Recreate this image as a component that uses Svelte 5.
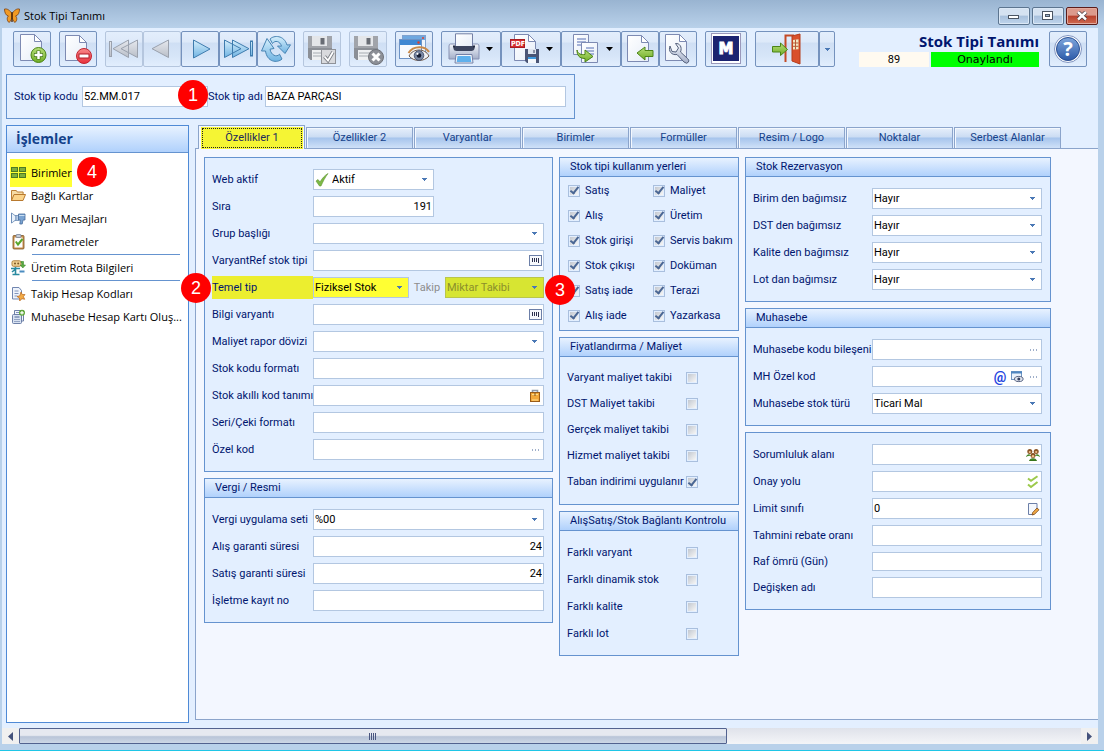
<script>
  const tabs = ['Özellikler 1', 'Özellikler 2', 'Varyantlar', 'Birimler', 'Formüller', 'Resim / Logo', 'Noktalar', 'Serbest Alanlar'];

  const actions = [
    { text: 'Birimler', icon: 'units', marked: true, badge: '4' },
    { text: 'Bağlı Kartlar', icon: 'folder' },
    { text: 'Uyarı Mesajları', icon: 'horn' },
    { text: 'Parametreler', icon: 'clipboard' },
    { text: 'Üretim Rota Bilgileri', icon: 'route', rule: true },
    { text: 'Takip Hesap Kodları', icon: 'account', rule: true },
    { text: 'Muhasebe Hesap Kartı Oluş...', icon: 'ledger' }
  ];

  const general = [
    { label: 'Web aktif', select: 'Aktif', half: true, check: true },
    { label: 'Sıra', value: '191', half: true, right: true },
    { label: 'Grup başlığı', select: '' },
    { label: 'VaryantRef stok tipi', value: '', icons: ['barcode'] },
    { label: 'Temel tip', pair: true },
    { label: 'Bilgi varyantı', value: '', icons: ['barcode'] },
    { label: 'Maliyet rapor dövizi', select: '' },
    { label: 'Stok kodu formatı', value: '' },
    { label: 'Stok akıllı kod tanımı', value: '', icons: ['lock'] },
    { label: 'Seri/Çeki formatı', value: '' },
    { label: 'Özel kod', value: '', icons: ['dots'] }
  ];
  const tax = [
    { label: 'Vergi uygulama seti', select: '%00' },
    { label: 'Alış garanti süresi', value: '24', right: true },
    { label: 'Satış garanti süresi', value: '24', right: true },
    { label: 'İşletme kayıt no', value: '' }
  ];
  const reservation = [
    { label: 'Birim den bağımsız', select: 'Hayır' },
    { label: 'DST den bağımsız', select: 'Hayır' },
    { label: 'Kalite den bağımsız', select: 'Hayır' },
    { label: 'Lot dan bağımsız', select: 'Hayır' }
  ];
  const accounting = [
    { label: 'Muhasebe kodu bileşeni', value: '', icons: ['dots'] },
    { label: 'MH Özel kod', value: '', icons: ['at', 'preview', 'dots'] },
    { label: 'Muhasebe stok türü', select: 'Ticari Mal' }
  ];
  const extra = [
    { label: 'Sorumluluk alanı', value: '', icons: ['people'] },
    { label: 'Onay yolu', value: '', icons: ['checks'] },
    { label: 'Limit sınıfı', value: '0', icons: ['edit'] },
    { label: 'Tahmini rebate oranı', value: '' },
    { label: 'Raf ömrü (Gün)', value: '', short: true },
    { label: 'Değişken adı', value: '' }
  ];
  const places = ['Satış', 'Maliyet', 'Alış', 'Üretim', 'Stok girişi', 'Servis bakım', 'Stok çıkışı', 'Doküman', 'Satış iade', 'Terazi', 'Alış iade', 'Yazarkasa'];
  const pricing = [
    ['Varyant maliyet takibi', false],
    ['DST Maliyet takibi', false],
    ['Gerçek maliyet takibi', false],
    ['Hizmet maliyet takibi', false],
    ['Taban indirimi uygulanır', true]
  ];
  const control = [
    ['Farklı varyant', false],
    ['Farklı dinamik stok', false],
    ['Farklı kalite', false],
    ['Farklı lot', false]
  ];

  const slug = (s) => s.toLowerCase().replace(/[^a-zçğıöşü0-9]+/g, '-');
</script>

{#snippet arrow()}
  <svg class="arrow" width="5" height="3" viewBox="0 0 5 3" aria-hidden="true"><path d="M0 0h5v1H4v1H3v1H2V2H1V1H0z" fill="currentColor" /></svg>
{/snippet}

{#snippet caret()}
  <svg width="8" height="5" viewBox="0 0 8 5" aria-hidden="true"><path d="M0 0h7L3.500 4z" fill="#000" /></svg>
{/snippet}

{#snippet smallIcon(name)}
  <svg width="16" height="16" viewBox="0 0 16 16" aria-hidden="true">
    {#if name === 'units'}
      <g fill="#7fae3a" stroke="#4e7a24"><rect x="1.500" y="2.500" width="6" height="4" /><rect x="9.500" y="2.500" width="6" height="4" /><rect x="1.500" y="8.500" width="6" height="4" /><rect x="9.500" y="8.500" width="6" height="4" /></g>
    {:else if name === 'folder'}
      <path d="M1.500 13V2.500h4.800l1 1.500h5.800v2.500" fill="#f6dca6" stroke="#bb7f35" />
      <path d="M1.500 12.500L4 6.500h11.500l-2.500 6z" fill="#fbd48b" stroke="#b8792e" />
    {:else if name === 'horn'}
      <path d="M1.500 2v10c1.500-.5 2.500-2.500 4.500-2.800V4.800C4 4.500 3 2.500 1.500 2z" fill="#e9f1fa" stroke="#6f8fb8" />
      <rect x="6" y="4.500" width="3" height="5" fill="#b9cee6" stroke="#6f8fb8" stroke-width=".8" />
      <path d="M8.500 3h6.500v6h-2l-.8 4h-2.400l.6-4H8.500z" fill="#79a3d2" stroke="#4a6d9c" stroke-width=".8" /><path d="M9 4.500h5.500" stroke="#c9def2" />
    {:else if name === 'clipboard'}
      <rect x="3" y="1.500" width="11" height="13.500" rx="1" fill="#c98f4e" stroke="#7d5522" stroke-width=".8" />
      <rect x="4.500" y="3.500" width="8" height="10" fill="#fdfdfd" /><rect x="6" y=".5" width="5" height="3" rx="1" fill="#c6ccd6" stroke="#697890" stroke-width=".7" />
      <path d="M5.800 7.500l2.200 3L12.500 5" fill="none" stroke="#57a62c" stroke-width="2" />
    {:else if name === 'route'}
      <rect x="2" y=".8" width="9" height="5.500" rx="1.500" fill="#f2d394" stroke="#b0813c" /><circle cx="5" cy="3.500" r="1" fill="#7a5522" /><circle cx="8.200" cy="3.500" r="1" fill="#7a5522" />
      <path d="M11 1.500h2.500V5H15.500L12.800 8 10.300 5H12V3h-1z" fill="#5fae45" stroke="#3d8a2c" stroke-width=".6" />
      <path d="M1 8.500h9M5.500 7v7M2.500 14.500h7M2 12l3-2.500" stroke="#2a8aa0" stroke-width="1.600" fill="none" /><path d="M9.500 11.500h5" stroke="#4b8cc0" stroke-width="2" />
    {:else if name === 'account'}
      <path d="M2.500 1.500h6.500l2.500 3v8.500h-9z" fill="#eef3fb" stroke="#7186b0" /><path d="M4.500 5h4M4.500 7.500h4M4.500 10h3" stroke="#8295bd" />
      <path d="M11 6l1.200 2.500H15l-1.600 2.200 1.300 2.600-2.900-.6L9.700 15l-.2-3L7 10.600l2.800-.8z" fill="#f4ab45" stroke="#b9691e" stroke-width=".7" />
    {:else if name === 'ledger'}
      <path d="M4.500 5V1.500h9V12H11" fill="#f3f6fb" stroke="#6d80a8" /><path d="M6 3.500h3" stroke="#8295bd" />
      <rect x="2.500" y="5.500" width="9" height="9" rx="1" fill="#d8e2f1" stroke="#6d80a8" /><path d="M4.500 8h5M4.500 10.500h1M6.500 10.500h1M8.500 10.500h1M4.500 12.500h1M6.500 12.500h1M8.500 12.500h1" stroke="#4e6797" />
      <circle cx="12" cy="3.800" r="3" fill="#5da537" /><path d="M12 2v3.600M10.200 3.800h3.600" stroke="#fff" stroke-width="1.200" />
    {:else if name === 'check'}
      <path d="M2 9l2-1.500 2 2.500C8 6.500 10.500 3.500 14 1.500 11 5.500 9 9.500 7 14H5.500z" fill="#7db945" stroke="#5c9430" stroke-width=".6" />
    {:else if name === 'barcode'}
      <rect x="2.500" y="2.500" width="12" height="10" fill="#f7f9fd" stroke="#6c7fa8" /><path d="M5.500 5v4M7.500 5v4M9.500 5v4M11.500 5v5" stroke="#2b2f4d" />
    {:else if name === 'lock'}
      <path d="M5.500 6V2.500h5V6" fill="none" stroke="#8d96a5" stroke-width="1.600" /><rect x="3.500" y="4.500" width="9" height="9" fill="#f2a83a" stroke="#9a5c18" /><path d="M5 6.500h6M5 12h6" stroke="#ffdc8c" /><path d="M8 5v3" stroke="#7a5522" />
    {:else if name === 'dots'}
      <path d="M5 8h1M8 8h1M11 8h1" stroke="#3f5f94" />
    {:else if name === 'preview'}
      <rect x="2.500" y="2.500" width="10" height="8" fill="#eaf2fb" stroke="#6f95c2" /><path d="M2 3.500h11" stroke="#4f86c0" stroke-width="2" /><ellipse cx="9.800" cy="10" rx="4.300" ry="2.600" fill="#dfe4ee" stroke="#5a6684" /><circle cx="9.800" cy="10" r="1.500" fill="#34405f" />
    {:else if name === 'people'}
      <g fill="#8a5526"><circle cx="4.800" cy="4.500" r="2.500" /><circle cx="11.200" cy="4.500" r="2.500" /><circle cx="8" cy="8.500" r="2.500" /></g>
      <g fill="#f1c48e"><circle cx="4.800" cy="5" r="1.100" /><circle cx="11.200" cy="5" r="1.100" /><circle cx="8" cy="9.200" r="1.200" /></g>
      <path d="M1.500 9.500c.5-1.800 3-2.200 4-1M10.500 8.500c1-1.200 3.500-.8 4 1M4.500 13.500c.5-2.200 6.500-2.200 7 0z" fill="#4c9a2c" stroke="#37751d" />
    {:else if name === 'checks'}
      <path d="M3 4.500l3 2.300 6.500-4.500M3 10.500l3 2.500 6.500-5" fill="none" stroke="#9cc94b" stroke-width="2" />
    {:else if name === 'edit'}
      <path d="M3.500 2.500h8.500v6L9 13.500H3.500z" fill="#f5f8fd" stroke="#6c7fa8" /><path d="M12 7l2 1.800-4.500 4.500-2.500.7.700-2.500z" fill="#f0a742" stroke="#7c4a1c" stroke-width=".8" />
    {/if}
  </svg>
{/snippet}

{#snippet floppy(x, y, s)}
  <g transform="translate({x} {y}) scale({s})">
    <path d="M0 0h24v24H2.500L0 21.500z" fill="#8b8f96" /><path d="M0 0h24v12H0z" fill="#a1a4aa" />
    <rect x="4" y="0" width="15" height="10" fill="#e4e6e9" /><rect x="12.500" y="2" width="4" height="6.500" fill="#686c74" />
    <rect x="4" y="14" width="16" height="10" fill="#eef0f2" /><path d="M5 17h14M5 20h14" stroke="#bfc2c7" stroke-width="1.500" />
  </g>
{/snippet}

{#snippet pageShape(x, y, w, h)}
  <path d="M{x} {y}h{w - 7}l7 7v{h - 7}h-{w}z" fill="url(#paper)" stroke="#7d8ab2" />
  <path d="M{x + w - 7} {y}v7h7z" fill="#fff" stroke="#7d8ab2" />
{/snippet}

{#snippet toolIcon(name)}
  <svg width="32" height="32" viewBox="0 0 32 32" aria-hidden="true">
    {#if name === 'new'}
      {@render pageShape(4.5, 1.5, 21, 26)}
      <circle cx="22.500" cy="22" r="7.500" fill="url(#green)" stroke="#4b8416" /><path d="M22.500 17.500v9M18 22h9" stroke="#3d6f12" stroke-width="4" /><path d="M22.500 18v8M18.500 22h8" stroke="#fff" stroke-width="2.500" />
    {:else if name === 'delete'}
      {@render pageShape(3.5, 2.5, 21, 25)}
      <circle cx="22" cy="23" r="7.500" fill="url(#red)" stroke="#c22430" /><rect x="17" y="21" width="10" height="4" fill="#fff" stroke="#b01c28" />
    {:else if name === 'first'}
      <g fill="url(#gray)" stroke="#9aa1ad"><rect x="1.500" y="8.500" width="2" height="15" /><path d="M20.500 7v17.500L5 15.700zM29.500 7v17.500L13 15.700z" /></g>
    {:else if name === 'prev'}
      <path d="M22.500 7v17.500L6 15.700z" fill="url(#gray)" stroke="#9aa1ad" />
    {:else if name === 'next'}
      <path d="M9.500 7v18L26 16z" fill="url(#blue)" stroke="#3f7cae" />
    {:else if name === 'last'}
      <g fill="url(#blue)" stroke="#3f7cae"><path d="M2.500 7v17.500L19 15.700zM10.500 7v17.500L27 15.700z" /><rect x="28.500" y="8" width="2" height="15" /></g>
    {:else if name === 'refresh'}
      <g fill="url(#blue)" stroke="#4683b3"><path d="M10 6C14 2 24 2 27 12l3.500-.2L25 20.500 17.500 13l4 .2C20 8 15 7 12.500 10.500z" /><path d="M22 26C17 30.500 7 29 5.500 18L1.500 18 7 5.500 14 15.500l-4 .7c1 6 6.500 8.500 9.500 5z" /></g>
    {:else if name === 'saveok'}
      {@render floppy(2, 3, 1)}
      <rect x="15.500" y="16.500" width="14" height="14" fill="#d9dadd" stroke="#8f9298" /><path d="M18.500 23.500l3.500 4 5-8.500" fill="none" stroke="#7d8087" stroke-width="3.500" /><path d="M18.500 23.500l3.500 4 5-8.500" fill="none" stroke="#fff" stroke-width="1.800" />
    {:else if name === 'savex'}
      {@render floppy(2, 3, 1)}
      <circle cx="24" cy="24" r="7.500" fill="#8d9097" stroke="#6f7279" /><path d="M20.500 20.500l7 7M27.500 20.500l-7 7" stroke="#fff" stroke-width="3" />
    {:else if name === 'preview'}
      <rect x="4.500" y="2.500" width="23" height="18" fill="#eef5fc" stroke="#7fa2cf" /><path d="M5 3h22v4H5z" fill="#6fa8e0" /><circle cx="25" cy="5" r="1" fill="#e0402c" />
      <rect x="1.500" y="6.500" width="22" height="19" fill="#f6fafe" stroke="#6d93c6" /><path d="M2 7h21v5H2z" fill="#3f88d2" /><circle cx="20.500" cy="9.500" r="1.200" fill="#e0402c" />
      <path d="M11 23c4-8 16-8 20 0-5 6-15 6-20 0z" fill="#f1f2f5" stroke="#6b5648" /><path d="M10.500 20c5-8 17-7 20.500-1" fill="none" stroke="#c98a4a" stroke-width="2" /><circle cx="21" cy="22.500" r="4.800" fill="#7a88a3" stroke="#4b5875" /><circle cx="21" cy="22.500" r="2.300" fill="#151c33" /><circle cx="19.500" cy="20.800" r="1.100" fill="#fff" />
    {:else if name === 'print'}
      <path d="M2.500 11h27q1.500 0 1.500 2v13H1V13q0-2 1.500-2z" fill="url(#metal)" stroke="#8791b3" />
      <path d="M7.500.8h17V14h-17z" fill="url(#paper)" stroke="#7480a6" />
      <path d="M5.500 13h21v3q-1 2-3 2h-15q-2.500 0-3-2z" fill="#3c455f" /><path d="M6 12.500v2M26 12.500v2" stroke="#222a42" stroke-width="2" />
      <path d="M8 21.500h16l1 8.500H7z" fill="#f2f6fc" stroke="#7480a6" /><path d="M9.500 23h13l.8 6H8.700z" fill="#5fb0ec" />
    {:else if name === 'pdf'}
      <path d="M6.500 1.500h14l7 7v19h-21z" fill="url(#paper)" stroke="#7d8ab2" /><path d="M20.500 1.500v7h7z" fill="#fff" stroke="#7d8ab2" />
      <rect x="2.500" y="6.500" width="14" height="8" fill="#d52f30" stroke="#a81c22" /><text x="3" y="13" font-size="7" font-weight="700" fill="#fff" font-family="DejaVu Sans Condensed, sans-serif">PDF</text>
      <path d="M17 16h14v14H19l-2-2z" fill="#4a5575" /><rect x="20" y="16" width="8" height="5" fill="#dfe5ef" /><rect x="20" y="24" width="8" height="6" fill="#f5f8fc" /><path d="M20 25h8" stroke="#3f9ade" stroke-width="2" /><path d="M26 17v3" stroke="#39415e" />
    {:else if name === 'copy'}
      <path d="M5.500 1.500h15v20h-15z" fill="url(#paper)" stroke="#7d8ab2" /><path d="M9 6h9M9 9h9M9 12h5" stroke="#8a9ccb" stroke-width="1.500" />
      <path d="M13.500 9.500h16v20h-16z" fill="url(#paper)" stroke="#7d8ab2" /><path d="M18 15h8M18 18h8M21 21h5" stroke="#8a9ccb" stroke-width="1.500" />
      <path d="M9 17c1 4 4 5 8 4.500V17l8 6.500-8 5.500v-3.500C11 25.500 9 22 9 17z" fill="url(#green)" stroke="#4b8416" />
    {:else if name === 'import'}
      {@render pageShape(3.5, 2.5, 21, 26)}
      <path d="M13 20l8-6v3.500h8v6h-8V27z" fill="url(#green)" stroke="#4b8416" />
    {:else if name === 'wrench'}
      {@render pageShape(3.5, 1.5, 21, 26)}
      <path d="M8 13c-2 5 1.500 9.500 7 8.500l7 7.500q3 2.500 4.500 0 1-2-1-3.500L18.500 19c2-5-1-9-5-8.500l3 4.500-2.500 4-4-.5z" fill="url(#metal)" stroke="#56627d" />
    {:else if name === 'brand'}
      <rect x="1.500" y=".5" width="29" height="30" fill="#fff" stroke="#9a98ba" /><rect x="3" y="3" width="26" height="25" fill="#1b2370" />
      <text x="16" y="21" text-anchor="middle" font-size="15" font-weight="900" fill="#fff" stroke="#fff" font-family="DejaVu Sans, sans-serif">M</text>
    {:else if name === 'exit'}
      <path d="M14.500 29V2.500H23" fill="none" stroke="#c44a26" stroke-width="2" /><path d="M21 3l8-2v30l-8-3z" fill="#d9502b" stroke="#b63c1b" /><path d="M22 7l5.500-.7v10L22 16.500z" fill="#f2e6c2" /><path d="M24.500 6.500v10M22 10h5.500M22 13.300h5.500" stroke="#b65a38" />
      <path d="M1.500 13.500h8V10l7 6.500-7 6V19h-8z" fill="url(#green)" stroke="#4b8416" />
    {:else if name === 'help'}
      <circle cx="16" cy="16" r="13.500" fill="#fff" stroke="#7f93c0" /><circle cx="16" cy="16" r="11.500" fill="url(#help)" stroke="#2a4f92" />
      <text x="16" y="23" text-anchor="middle" font-size="20" font-weight="700" fill="#fff" font-family="Open Sans, sans-serif">?</text>
    {/if}
  </svg>
{/snippet}

{#snippet tool(name, label, kind = '')}
  <button type="button" class="tool {kind}" aria-label={label}>{@render toolIcon(name)}{#if kind === 'split'}{@render caret()}{/if}</button>
{/snippet}

{#snippet choice(id, value, check = false, disabled = false)}
  <span class="choice">
    {#if check}{@render smallIcon('check')}{/if}
    <select {id} {disabled} class:indent={check}><option>{value}</option></select>
    {@render arrow()}
  </span>
{/snippet}

{#snippet row(r, prefix)}
  {@const id = prefix + '-' + slug(r.label)}
  <div class="row">
    {#if r.pair}
      <label for={id} class="marked">{r.label}</label>
      <div class="pair">
        <div class="field yellow">{@render choice(id, 'Fiziksel Stok')}</div>
        <label for="takip" class="muted">Takip</label>
        <div class="field olive">{@render choice('takip', 'Miktar Takibi', false, true)}</div>
      </div>
      <span class="badge two">2</span>
      <span class="badge three">3</span>
    {:else}
      <label for={id}>{r.label}</label>
      <div class="field" class:half={r.half} class:short={r.short}>
        {#if r.select !== undefined}
          {@render choice(id, r.select, r.check)}
        {:else}
          <input {id} type="text" value={r.value} class:right={r.right} />
          {#each r.icons ?? [] as icon}
            {#if icon === 'at'}<span class="at">@</span>{:else}{@render smallIcon(icon)}{/if}
          {/each}
        {/if}
      </div>
    {/if}
  </div>
{/snippet}

{#snippet rows(list, prefix)}
  <div class="rows">{#each list as r}{@render row(r, prefix)}{/each}</div>
{/snippet}

<svg class="defs" width="0" height="0" aria-hidden="true">
  <defs>
    <linearGradient id="paper" x1="0" y1="0" x2="1" y2="1"><stop offset="0" stop-color="#fff" /><stop offset="1" stop-color="#e6edf8" /></linearGradient>
    <linearGradient id="green" x1="0" y1="0" x2="0" y2="1"><stop offset="0" stop-color="#b7e07a" /><stop offset="1" stop-color="#6fac25" /></linearGradient>
    <linearGradient id="red" x1="0" y1="0" x2="0" y2="1"><stop offset="0" stop-color="#f98a8a" /><stop offset="1" stop-color="#e8303c" /></linearGradient>
    <linearGradient id="gray" x1="0" y1="0" x2="0" y2="1"><stop offset="0" stop-color="#e6e9ee" /><stop offset="1" stop-color="#b9bec8" /></linearGradient>
    <linearGradient id="blue" x1="0" y1="0" x2="0" y2="1"><stop offset="0" stop-color="#d6effc" /><stop offset="1" stop-color="#6fb3e2" /></linearGradient>
    <linearGradient id="metal" x1="0" y1="0" x2="0" y2="1"><stop offset="0" stop-color="#f3f6fb" /><stop offset="1" stop-color="#a3aec8" /></linearGradient>
    <linearGradient id="help" x1="0" y1="0" x2="0" y2="1"><stop offset="0" stop-color="#7fa6dc" /><stop offset="1" stop-color="#2c5aa8" /></linearGradient>
  </defs>
</svg>

<div class="window">
  <header class="titlebar">
    <svg width="16" height="16" viewBox="0 0 16 16" aria-hidden="true">
      <path d="M8 6C6 2 3 .5.500 1c0 3 1 6.500 4 7-2 1.500-1.500 5 .5 6.500C7 13.500 8 10 8 7zM8 6c2-4 5-5.500 7.500-5 0 3-1 6.500-4 7 2 1.500 1.500 5-.5 6.500C9 13.500 8 10 8 7z" fill="#f19a24" stroke="#7c3f0c" stroke-width=".8" /><path d="M8 4v10" stroke="#4a2508" stroke-width="1.300" />
    </svg>
    <span class="caption">Stok Tipi Tanımı</span>
    <div class="winbtns">
      <button type="button" aria-label="Simge durumuna küçült"><svg width="12" height="10" viewBox="0 0 12 10"><rect x=".5" y="4.500" width="10" height="3" fill="#fff" stroke="#4b5563" /></svg></button>
      <button type="button" aria-label="Önceki boyut"><svg width="12" height="10" viewBox="0 0 12 10"><rect x=".5" y=".5" width="10" height="8" fill="#fff" stroke="#4b5563" /><rect x="3.500" y="3.500" width="4" height="2" fill="#9fb5cf" stroke="#4b5563" /></svg></button>
      <button type="button" class="close" aria-label="Kapat"><svg width="12" height="10" viewBox="0 0 12 10"><path d="M2 1l8 7.500M10 1L2 8.500" stroke="#4b3a40" stroke-width="4" /><path d="M2 1l8 7.500M10 1L2 8.500" stroke="#fff" stroke-width="2.400" /></svg></button>
    </div>
  </header>

  <div class="client">
    <div class="toolbar">
      <div class="group">{@render tool('new', 'Yeni')}</div>
      <div class="group">{@render tool('delete', 'Sil')}</div>
      <div class="group">
        {@render tool('first', 'İlk', 'off')}{@render tool('prev', 'Önceki', 'off')}{@render tool('next', 'Sonraki')}{@render tool('last', 'Son')}{@render tool('refresh', 'Yenile')}
      </div>
      <div class="group">{@render tool('saveok', 'Kaydet', 'off')}</div>
      <div class="group">{@render tool('savex', 'Vazgeç', 'off')}</div>
      <div class="group">{@render tool('preview', 'Önizle')}</div>
      <div class="group">
        {@render tool('print', 'Yazdır', 'split')}{@render tool('pdf', 'PDF kaydet', 'split')}{@render tool('copy', 'Kopyala', 'split')}{@render tool('import', 'Al')}{@render tool('wrench', 'Ayarlar')}
      </div>
      <div class="group">{@render tool('brand', 'M', 'brand')}</div>
      <div class="group">{@render tool('exit', 'Çıkış', 'exit')}<button type="button" class="tool more" aria-label="Çıkış seçenekleri">{@render arrow()}</button></div>
      <div class="status">
        <h1>Stok Tipi Tanımı</h1>
        <div class="state"><span class="count">89</span><span class="ok">Onaylandı</span></div>
      </div>
      {@render tool('help', 'Yardım')}
    </div>

    <section class="head box">
      <label for="code">Stok tip kodu</label>
      <div class="field"><input id="code" type="text" value="52.MM.017" /></div>
      <label for="name">Stok tip adı</label>
      <div class="field"><input id="name" type="text" value="BAZA PARÇASI" /></div>
      <span class="badge one">1</span>
    </section>

    <div class="main">
      <aside class="side">
        <h2>İşlemler</h2>
        <nav>
          {#each actions as a}
            {#if a.rule}<hr />{/if}
            <div class="action">
              <a href="#{a.icon}" class:marked={a.marked}>{@render smallIcon(a.icon)}<span>{a.text}</span></a>
              {#if a.badge}<span class="badge four">{a.badge}</span>{/if}
            </div>
          {/each}
        </nav>
      </aside>

      <div class="work">
        <div class="tabs" role="tablist">
          {#each tabs as t, i}
            <button type="button" role="tab" aria-selected={i === 0} class:active={i === 0}><span>{t}</span></button>
          {/each}
        </div>
        <div class="page" role="tabpanel">
          <div class="col wide">
            <section class="box">{@render rows(general, 'g')}</section>
            <section class="box"><h3>Vergi / Resmi</h3>{@render rows(tax, 'v')}</section>
          </div>
          <div class="col">
            <section class="box">
              <h3>Stok tipi kullanım yerleri</h3>
              <div class="places">
                {#each places as p}<label><input type="checkbox" checked /><span>{p}</span></label>{/each}
              </div>
            </section>
            <section class="box">
              <h3>Fiyatlandırma / Maliyet</h3>
              <div class="flags">{#each pricing as [p, on]}<label><span>{p}</span><input type="checkbox" checked={on} /></label>{/each}</div>
            </section>
            <section class="box">
              <h3>AlışSatış/Stok Bağlantı Kontrolu</h3>
              <div class="flags loose">{#each control as [p, on]}<label><span>{p}</span><input type="checkbox" checked={on} /></label>{/each}</div>
            </section>
          </div>
          <div class="col far">
            <section class="box"><h3>Stok Rezervasyon</h3>{@render rows(reservation, 'r')}</section>
            <section class="box"><h3>Muhasebe</h3>{@render rows(accounting, 'm')}</section>
            <section class="box">{@render rows(extra, 'e')}</section>
          </div>
        </div>
      </div>
    </div>

    <div class="scroll">
      <button type="button" aria-label="Sola kaydır"><svg width="5" height="9" viewBox="0 0 5 9"><path d="M5 0v9L0 4.500z" fill="#44527c" /></svg></button>
      <div class="track"><div class="thumb"><svg width="8" height="7" viewBox="0 0 8 7"><path d="M.5 0v7M2.500 0v7M4.500 0v7M6.500 0v7" stroke="#4a5680" /></svg></div></div>
      <button type="button" aria-label="Sağa kaydır"><svg width="5" height="9" viewBox="0 0 5 9"><path d="M0 0v9l5-4.500z" fill="#44527c" /></svg></button>
    </div>
  </div>
</div>

<style>
  :global(body) { background: #b9d1ea; }
  * { box-sizing: border-box; }
  .defs { position: absolute; }
  .window {
    --line: #6593cf;
    --soft: #b3c7e1;
    --ink: #00156e;
    display: flex; flex-direction: column; min-height: 100vh;
    padding: 0 6px 6px 2px; background: #b9d1ea; border-bottom: 1px solid #1fc6e6;
    font-family: Roboto, "Noto Sans", sans-serif; font-size: 11px; line-height: 14px; color: var(--ink);
  }
  button, input, select { font: inherit; color: inherit; margin: 0; }
  h1, h2, h3 { margin: 0; }
  svg { display: block; flex: none; }

  .titlebar { display: flex; align-items: center; height: 28px; margin: 0 -6px 0 -2px; padding: 4px 6px 0 4px; gap: 4px; background: linear-gradient(#99b4d1, #b9d1ea); }
  .caption { font-family: "Open Sans", sans-serif; line-height: 16px; color: #000; }
  .winbtns { display: flex; gap: 2px; margin-left: auto; }
  .winbtns button { display: grid; place-items: center; width: 32px; height: 18px; padding: 0; border: 1px solid #5c7590; border-radius: 2px; background: linear-gradient(#d5e2f1 45%, #a8c0dc 50%, #bfd5ec); box-shadow: inset 0 0 0 1px #dbe8f6; }
  .winbtns .close { border-color: #5c1d1a; background: linear-gradient(#dc9a8c 45%, #b8402c 50%, #cf6a50); box-shadow: inset 0 0 0 1px #e3a99c; }

  .client { flex: 1; display: flex; flex-direction: column; background: #e3efff; }
  .toolbar { display: flex; gap: 8px; padding: 3px 11px 0; }
  .group { display: flex; }
  .tool { display: flex; align-items: center; justify-content: center; width: 38px; height: 36px; padding: 0; border: 1px solid #7592bd; border-radius: 2px; background: linear-gradient(#e3eefc 0, #dde9f9 30%, #cfdff4 32%, #d6e5f8 70%, #e2eefd); }
  .tool.off { border-color: #b5c6de; }
  .tool.split { width: 60px; justify-content: space-between; padding: 0 6px 0 6px; }
  .tool.brand { width: 42px; }
  .tool.exit { width: 64px; }
  .tool.more { width: 16px; color: #4a78b5; }
  .status { margin-left: auto; margin-right: 2px; text-align: right; }
  .status h1 { font-family: "Open Sans", sans-serif; font-size: 15px; line-height: 21px; font-weight: 700; color: var(--ink); }
  .state { display: flex; gap: 2px; color: #000; text-align: center; line-height: 15px; }
  .count { width: 70px; background: #fffaf0; }
  .ok { width: 108px; background: #0f0; font-family: "DejaVu Sans", sans-serif; }

  .box { border: 1px solid var(--line); background: #e3efff; }
  .head { position: relative; display: grid; grid-template-columns: 68px 126px 57px 301px; align-items: center; width: 569px; margin: 7px 0 0 4px; padding: 11px 7px; white-space: nowrap; }

  .field { display: flex; align-items: center; height: 21px; border: 1px solid var(--soft); background: #fff; color: #000; min-width: 0; }
  .field.half { width: 121px; }
  .field.short { height: 19px; }
  .field input { flex: 1; width: 100%; min-width: 0; height: 100%; padding: 0 1px; border: 0; background: none; outline: 0; }
  .field .right { text-align: right; }
  .at { width: 18px; text-align: center; font-size: 14px; font-weight: 700; color: #1f45e0; }
  .choice { flex: 1; display: grid; align-items: center; height: 100%; min-width: 0; }
  .choice > :global(*) { grid-area: 1 / 1; }
  .choice > :global(.arrow) { justify-self: end; margin-right: 6px; color: #4a78b5; pointer-events: none; }
  .choice select { width: 100%; height: 100%; padding: 0 1px; border: 0; background: none; appearance: none; outline: 0; opacity: 1; }
  .choice select.indent { padding-left: 18px; }

  .main { flex: 1; display: grid; grid-template-columns: 183px 1fr; gap: 6px; margin: 6px 0 5px 4px; }
  .side { border: 1px solid #4f8ad6; background: #fff; font-family: "Open Sans", sans-serif; color: #000; min-width: 0; }
  .side h2 { height: 27px; padding-left: 9px; border-bottom: 1px solid var(--line); background: linear-gradient(#e8f2ff, #b0d1fc); font-size: 14px; line-height: 26px; color: #15428b; }
  nav { padding: 8px 3px; }
  .action { position: relative; display: flex; height: 23px; align-items: center; }
  .action a { display: flex; align-items: center; gap: 5px; height: 23px; color: #000; text-decoration: none; white-space: nowrap; }
  .action a.marked { height: 28px; background: #ff3; }
  hr { height: 1px; margin: 1px 5px 1px 22px; border: 0; background: var(--line); }

  .work { display: flex; flex-direction: column; min-width: 0; padding-bottom: 3px; }
  .tabs { display: flex; align-items: flex-end; gap: 1px; height: 23px; padding-left: 3px; }
  .tabs button { width: 107px; height: 21px; padding: 0; border: 1px solid #8ba4cb; border-bottom: 0; background: linear-gradient(#e6effb 0, #cbdcf3 45%, #a6c4ec 50%, #cfe1f8); box-shadow: inset 1px 1px 0 #f4f8fe; color: #15428b; }
  .tabs .active { height: 24px; margin-bottom: -1px; padding: 1px 1px 0 2px; background: #f3f7ff; z-index: 1; color: #1b2a5c; }
  .tabs .active span { display: block; height: 22px; line-height: 22px; background: #f5f534; outline: 1px dotted #222; outline-offset: -2px; }
  .page { flex: 1; display: flex; gap: 6px; align-items: flex-start; padding: 8px; border: 1px solid #8ba4cb; border-right: 0; background: #f3f7ff; }
  .col { display: flex; flex-direction: column; gap: 6px; width: 180px; }
  .col.wide { width: 349px; }
  .col.far { width: 306px; }
  h3 { height: 19px; padding-left: 10px; border-bottom: 1px solid var(--line); background: linear-gradient(#e8f2ff, #b0d1fc); font-size: 11px; line-height: 18px; font-weight: 400; white-space: nowrap; }
  .rows { display: flex; flex-direction: column; gap: 6px; padding: 11px 8px 11px 7px; }
  .row { position: relative; display: grid; grid-template-columns: 101px 1fr; align-items: center; }
  .far .row { grid-template-columns: 119px 1fr; }
  .row label { white-space: nowrap; }
  .row .marked { margin: -1px 0; line-height: 23px; background: #ecee2f; }
  .row .muted { color: #8d8d8d; }
  .pair { display: grid; grid-template-columns: 96px 1fr 99px; align-items: center; text-align: center; }
  .field.yellow { background: #ff3; }
  .field.olive { background: #d7e532; border-color: #b9c64b; color: #8b8f2b; }

  input[type="checkbox"] { appearance: none; display: grid; place-items: center; width: 12px; height: 12px; border: 1px solid #a9bfde; background: linear-gradient(135deg, #c3c8d0, #f7f7f7) content-box; padding: 1px; background-color: #fff; }
  input[type="checkbox"]:checked::after { content: ""; width: 3px; height: 7px; margin-top: -2px; border: solid #4a6694; border-width: 0 2px 2px 0; rotate: 38deg; }
  .places { display: grid; grid-template-columns: 85px 1fr; grid-auto-rows: 25px; padding: 1px 0 2px 8px; }
  .places label { display: flex; align-items: center; gap: 5px; white-space: nowrap; }
  .flags { padding: 8px 40px 9px 7px; }
  .flags label { display: flex; align-items: center; justify-content: space-between; height: 26px; white-space: nowrap; }
  .flags.loose { padding-bottom: 8px; }
  .flags.loose label { height: 27px; }

  .badge { position: absolute; display: grid; place-items: center; width: 30px; height: 30px; border-radius: 50%; background: #f00; color: #fff; font: 18px/20px "Liberation Sans", sans-serif; z-index: 2; }
  .one { left: 171px; top: 5px; }
  .two { left: -31px; top: -4px; }
  .three { right: -31px; top: -2px; }
  .four { left: 67px; top: -4px; }

  .scroll { display: flex; align-items: stretch; height: 16px; background: #f0f0f0; }
  .scroll button { display: grid; place-items: center; width: 17px; padding: 0; border: 0; background: none; }
  .track { flex: 1; display: grid; grid-template-columns: 2fr 1fr; background: linear-gradient(#dfe2ea, #f4f5f8); }
  .thumb { display: grid; place-items: center; border: 1px solid #52628f; border-radius: 1px; background: linear-gradient(#e6e9f0 45%, #b9c5d8 55%, #cdd7e6); }
</style>
